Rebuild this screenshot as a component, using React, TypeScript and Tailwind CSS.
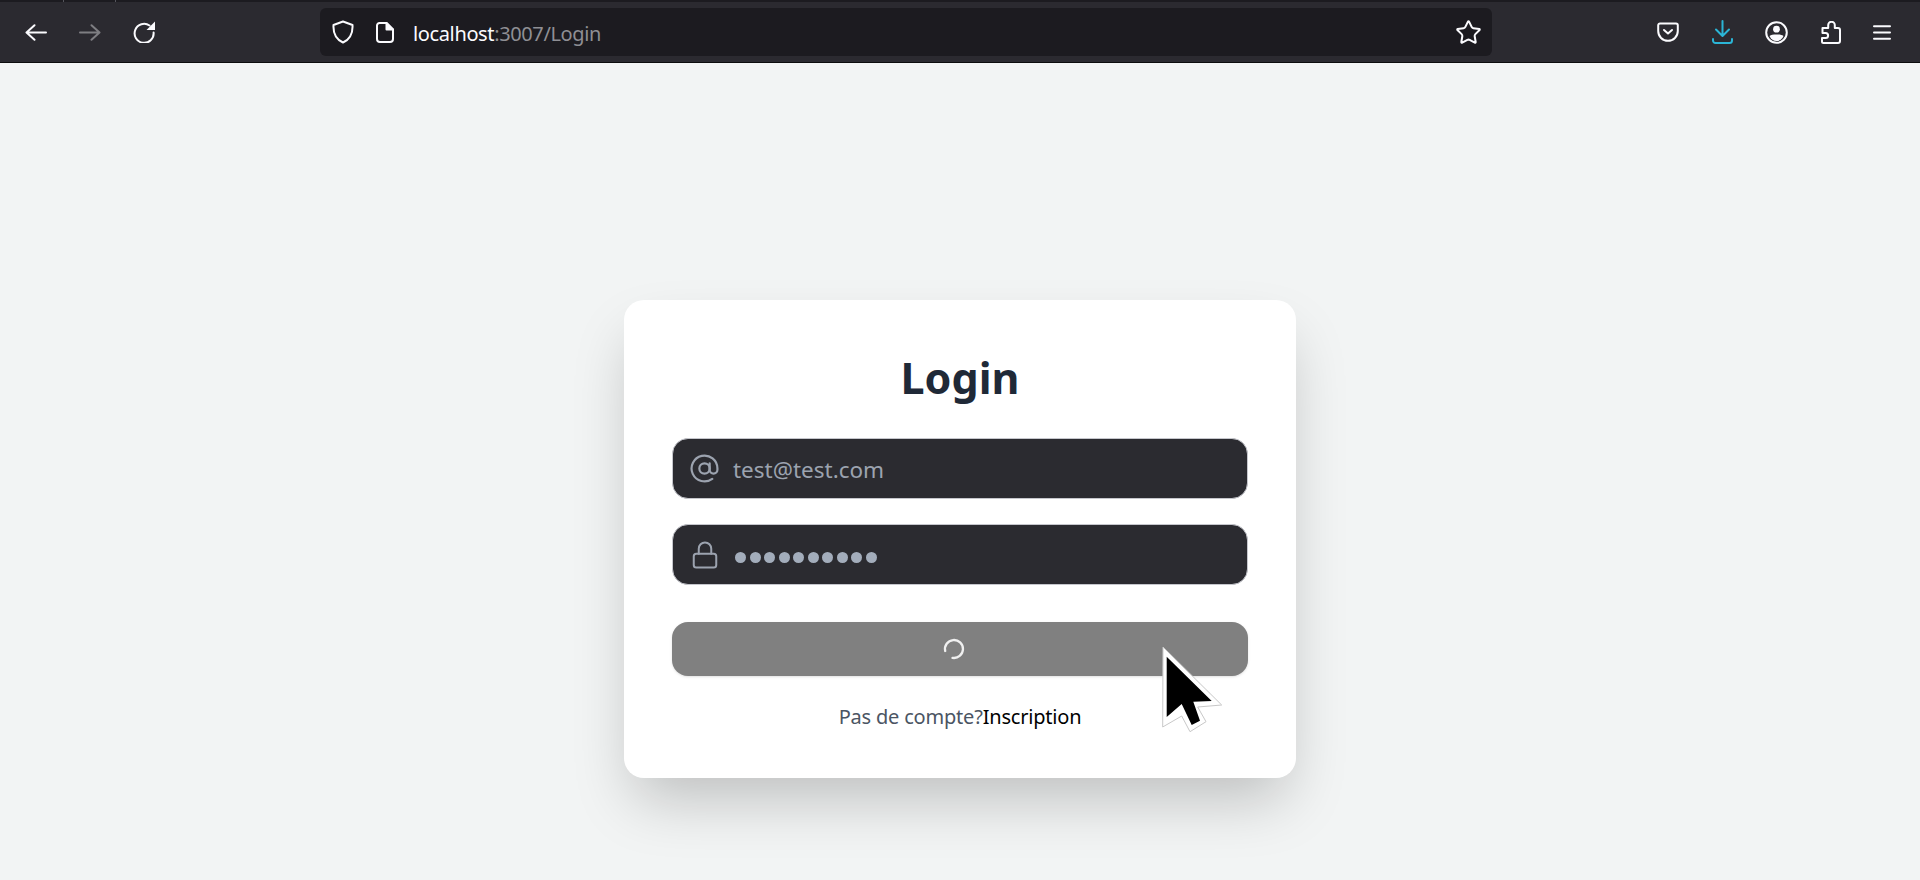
import { AtSign, Lock, Star } from 'lucide-react'

function BackArrow() {
  return (
    <svg width="22" height="17" viewBox="0 0 22 17" fill="none" stroke="#fbfbfe" strokeWidth="2" strokeLinecap="round" strokeLinejoin="round">
      <path d="M21 8.5 H2 M9.5 1.2 L1.5 8.5 L9.5 15.8" />
    </svg>
  )
}

function ForwardArrow() {
  return (
    <svg className="opacity-40" width="22" height="17" viewBox="0 0 22 17" fill="none" stroke="#fbfbfe" strokeWidth="2" strokeLinecap="round" strokeLinejoin="round">
      <path d="M1 8.5 H20 M12.5 1.2 L20.5 8.5 L12.5 15.8" />
    </svg>
  )
}

function Reload() {
  return (
    <svg width="22" height="22" viewBox="0 0 22 22" fill="none">
      <path d="M16.5 4.5 A9.5 9.5 0 1 0 20.6 11.5" stroke="#fbfbfe" strokeWidth="2" strokeLinecap="round" />
      <path d="M22 0.5 V9 H13.5 Z" fill="#fbfbfe" />
    </svg>
  )
}

function Shield() {
  return (
    <svg width="22" height="24" viewBox="0 0 22 24" fill="none" stroke="#fbfbfe" strokeWidth="2" strokeLinejoin="round">
      <path d="M11 1.5 L20.5 5 C21 13.5 17.5 19.5 11 22.5 C4.5 19.5 1 13.5 1.5 5 Z" />
    </svg>
  )
}

function PageIcon() {
  return (
    <svg width="18" height="21" viewBox="0 0 18 21" fill="none" stroke="#fbfbfe" strokeWidth="2" strokeLinejoin="round">
      <path d="M3.5 1 H10.5 L17 7.5 V17 a3 3 0 0 1 -3 3 H4 a3 3 0 0 1 -3 -3 V3.5 A2.5 2.5 0 0 1 3.5 1 Z" />
      <path d="M10.5 1 V7.5 H17 Z" fill="#fbfbfe" />
    </svg>
  )
}

function Pocket() {
  return (
    <svg width="22" height="20" viewBox="0 0 22 20" fill="none" stroke="#fbfbfe" strokeWidth="2" strokeLinecap="round" strokeLinejoin="round">
      <path d="M3 1.5 H19 A1.8 1.8 0 0 1 20.8 3.3 V9 A9.8 9.8 0 0 1 1.2 9 V3.3 A1.8 1.8 0 0 1 3 1.5 Z" />
      <path d="M7 8 L11 11.5 L15 8" />
    </svg>
  )
}

function DownloadIcon() {
  return (
    <svg width="21" height="24" viewBox="0 0 21 24" fill="none" stroke="#2bb5d6" strokeWidth="2" strokeLinecap="round" strokeLinejoin="round">
      <path d="M10.5 1 V15.5 M4 9.5 L10.5 16 L17 9.5" />
      <path d="M1 19 V20.5 a2.5 2.5 0 0 0 2.5 2.5 H17.5 a2.5 2.5 0 0 0 2.5 -2.5 V19" />
    </svg>
  )
}

function Account() {
  return (
    <svg width="23" height="23" viewBox="0 0 23 23" fill="none">
      <circle cx="11.5" cy="11.5" r="10.3" stroke="#fbfbfe" strokeWidth="2" />
      <circle cx="11.5" cy="8.2" r="3.4" fill="#fbfbfe" />
      <path d="M4.5 15 C6 13.6 8 13.4 11.5 13.4 C15 13.4 17 13.6 18.5 15 C17 18.5 14.5 20 11.5 20 C8.5 20 6 18.5 4.5 15 Z" fill="#fbfbfe" />
    </svg>
  )
}

function Extensions() {
  return (
    <svg width="20" height="23" viewBox="0 0 20 23" fill="none" stroke="#fbfbfe" strokeWidth="2" strokeLinejoin="round">
      <path d="M2.5 22 H17 a2 2 0 0 0 2 -2 V9 a2 2 0 0 0 -2 -2 H13.8 V4 a3.3 3.3 0 0 0 -6.6 0 V7 H1.5 V12 H4.6 a2.5 2.5 0 0 1 0 5 H1 V20.5 A1.5 1.5 0 0 0 2.5 22 Z" />
    </svg>
  )
}

function MenuIcon() {
  return (
    <svg width="18" height="15" viewBox="0 0 18 15" fill="none" stroke="#fbfbfe" strokeWidth="2" strokeLinecap="round">
      <path d="M1 1.2 H17 M1 7.5 H17 M1 13.8 H17" />
    </svg>
  )
}

function Spinner() {
  return (
    <svg width="22" height="22" viewBox="0 0 22 22" fill="none" stroke="#f0f0f0" strokeWidth="2.3" strokeLinecap="round">
      <path d="M2.2 13 A9 9 0 1 1 9.5 19.87" />
    </svg>
  )
}

function Cursor() {
  return (
    <svg className="absolute left-[1162px] top-[646px]" width="62" height="87" viewBox="0 0 62 87">
      <path d="M1 1 L59.7 59 L35.7 61 L44 75.7 L28 85.7 L19.7 70 L0.7 81 Z" fill="#fff" stroke="#c8c8c8" strokeWidth="1" />
      <path d="M4.7 10.7 L49.7 55 L31.3 55.7 L38 74.7 L29.7 79 L19.7 58 L4.7 71 Z" fill="#000" />
    </svg>
  )
}

export default function App() {
  return (
    <div className="relative h-[880px] overflow-hidden bg-[#f2f4f4] font-['Noto_Sans','Open_Sans',sans-serif]">
      {/* Browser chrome */}
      <div className="h-[2px] bg-[#1c1b20] flex pl-[63px] gap-[51px]">
        <div className="w-px bg-[#55555c]" />
        <div className="w-px bg-[#55555c]" />
      </div>
      <div className="h-[61px] bg-[#2b2a30] border-b border-b-[#0c0c0d] flex items-center pl-[25px]">
        <BackArrow />
        <div className="ml-[32px] flex"><ForwardArrow /></div>
        <div className="ml-[32px] flex"><Reload /></div>
        <div className="ml-[165px] w-[1172px] h-[48px] bg-[#1c1b20] rounded-[6px] flex items-center pl-[12px] pr-[10px]">
          <Shield />
          <div className="ml-[22px] flex"><PageIcon /></div>
          <span className="ml-[19px] mt-[3px] text-[20px] tracking-[-0.37px] text-[#fbfbfe]">
            localhost<span className="text-[#8f8f94]">:3007/Login</span>
          </span>
          <Star className="ml-auto w-[27px] h-[27px] text-[#fbfbfe]" strokeWidth={1.8} />
        </div>
        <div className="ml-[165px] flex items-center gap-[32.5px]">
          <Pocket />
          <DownloadIcon />
          <Account />
          <Extensions />
          <div className="flex"><MenuIcon /></div>
        </div>
      </div>

      {/* Login card */}
      <div className="flex justify-center pt-[237px]">
        <div className="w-[672px] h-[478px] bg-white rounded-[20px] px-[48px] pt-[51px] shadow-[0_30px_60px_-10px_rgba(0,0,0,0.22)]">
          <h1 className="text-center text-[43px] leading-[54px] font-bold text-[#1f2937]">Login</h1>
          <div className="mt-[33px] h-[61px] bg-[#2b2b30] rounded-[16px] border border-[#c5c6cc] flex items-center pl-[15px]">
            <div className="w-[33px] flex justify-center"><AtSign className="w-[31px] h-[31px] text-[#9ca3af]" strokeWidth={1.7} /></div>
            <span className="ml-[12px] mt-[3px] text-[22.5px] text-[#9ca3af]">test@test.com</span>
          </div>
          <div className="mt-[25px] h-[61px] bg-[#2b2b30] rounded-[16px] border border-[#c5c6cc] flex items-center pl-[15px]">
            <div className="w-[33px] flex justify-center"><Lock className="w-[30px] h-[30px] text-[#9ca3af]" strokeWidth={1.6} /></div>
            <span className="ml-[14px] mt-[6px] flex gap-[3.5px]">
              {Array.from({ length: 10 }).map((_, i) => (
                <span key={i} className="w-[11px] h-[11px] rounded-full bg-[#a3adbb]" />
              ))}
            </span>
          </div>
          <button className="mt-[37px] w-full h-[54px] bg-[#808080] rounded-[16px] flex items-center justify-center pr-[12px] shadow-sm">
            <Spinner />
          </button>
          <p className="mt-[28px] text-center text-[20px] leading-[26px] tracking-[-0.2px] text-[#4b5563]">
            Pas de compte?<span className="text-black">Inscription</span>
          </p>
        </div>
      </div>
      <Cursor />
    </div>
  )
}
